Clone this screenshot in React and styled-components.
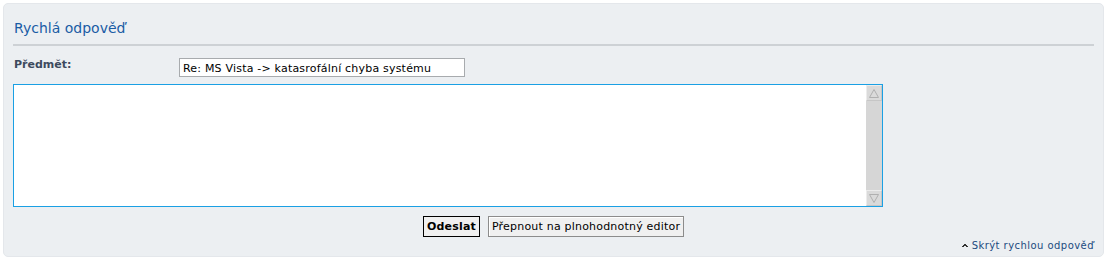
import React from 'react';
import styled, { createGlobalStyle } from 'styled-components';

const Global = createGlobalStyle`
  html, body {
    margin: 0;
    padding: 0;
    background: #fff;
  }
  body {
    font-family: "DejaVu Sans", Verdana, sans-serif;
  }
`;

const Page = styled.div`
  padding: 3px 3px 4px 3px;
`;

const Panel = styled.div`
  background: #eceff2;
  border: 1px solid #e4e7eb;
  border-radius: 5px;
  padding: 14px 9px 3px 9px;
  height: 254px;
  box-sizing: border-box;
`;

const Title = styled.h2`
  margin: 0;
  padding: 0 0 0 1px;
  font-weight: normal;
  font-size: 14px;
  line-height: 20px;
  color: #1a5ca5;
  border-bottom: 2px solid #cdd1d5;
  padding-bottom: 6px;
`;

const SubjectRow = styled.div`
  display: flex;
  align-items: center;
  margin-top: 12px;
`;

const Label = styled.label`
  width: 165px;
  font-size: 11px;
  font-weight: bold;
  color: #3c4a5e;
  margin-top: -6px;
  padding-left: 1px;
`;

const TextInput = styled.input`
  width: 286px;
  height: 19px;
  box-sizing: border-box;
  border: 1px solid #a8abae;
  background: #fff;
  font-family: "DejaVu Sans", Verdana, sans-serif;
  font-size: 11px;
  letter-spacing: 0.2px;
  color: #000;
  padding: 1px 3px 0 3px;
  outline: none;
`;

const EditorBox = styled.div`
  display: flex;
  width: 870px;
  height: 123px;
  margin-top: 7px;
  box-sizing: border-box;
  border: 1px solid #1aa0e4;
  background: #fff;
`;

const TextArea = styled.textarea`
  flex: 1;
  border: none;
  resize: none;
  outline: none;
  overflow: hidden;
  padding: 2px;
`;

const Scrollbar = styled.div`
  width: 16px;
  display: flex;
  flex-direction: column;
  justify-content: space-between;
  background: #d6d6d6;
`;

const ArrowButton = styled.div`
  width: 16px;
  height: 16px;
  box-sizing: border-box;
  border: 1px solid #c6c6c6;
  border-top-color: #ececec;
  border-left-color: #ececec;
  background: #dadada;
  display: flex;
  align-items: center;
  justify-content: center;
`;

const Buttons = styled.div`
  display: flex;
  justify-content: center;
  gap: 8px;
  margin-top: 9px;
`;

const Button = styled.button`
  height: 21px;
  box-sizing: border-box;
  font-family: "DejaVu Sans", Verdana, sans-serif;
  font-size: 11px;
  letter-spacing: 0.2px;
  font-weight: ${p => (p.$primary ? 'bold' : 'normal')};
  color: #000;
  background: #f0f0f0;
  border: 1px solid ${p => (p.$primary ? '#000' : '#8c8c8c')};
  box-shadow: ${p => (p.$primary ? 'none' : 'inset 1px 1px 0 #fff')};
  padding: 0 3px;
  border-radius: 0;
`;

const Footer = styled.div`
  display: flex;
  justify-content: flex-end;
  margin-top: 3px;
`;

const HideLink = styled.a`
  display: flex;
  align-items: center;
  gap: 4px;
  font-size: 10px;
  color: #1b4b80;
  text-decoration: none;
  letter-spacing: 0.45px;
`;

const Arrow = ({ down }) => (
  <svg width="12" height="11" viewBox="0 0 12 11">
    {down ? (
      <path d="M1.5 1.5 H10.5 L6 9.5 Z" fill="none" stroke="#b0b0b0" />
    ) : (
      <path d="M6 1.5 L10.5 9.5 H1.5 Z" fill="none" stroke="#b0b0b0" />
    )}
  </svg>
);

const App = () => (
  <Page>
    <Global />
    <Panel>
      <Title>Rychlá odpověď</Title>
      <SubjectRow>
        <Label>Předmět:</Label>
        <TextInput defaultValue="Re: MS Vista -> katasrofální chyba systému" />
      </SubjectRow>
      <EditorBox>
        <TextArea />
        <Scrollbar>
          <ArrowButton><Arrow /></ArrowButton>
          <ArrowButton><Arrow down /></ArrowButton>
        </Scrollbar>
      </EditorBox>
      <Buttons>
        <Button $primary>Odeslat</Button>
        <Button>Přepnout na plnohodnotný editor</Button>
      </Buttons>
      <Footer>
        <HideLink href="#">
          <svg width="6" height="4" viewBox="0 0 6 4">
            <path d="M2 0 H4 V1 H5 V2 H6 V3 H4 V2 H2 V3 H0 V2 H1 V1 H2 Z" fill="#333" />
          </svg>
          Skrýt rychlou odpověď
        </HideLink>
      </Footer>
    </Panel>
  </Page>
);

export default App;
